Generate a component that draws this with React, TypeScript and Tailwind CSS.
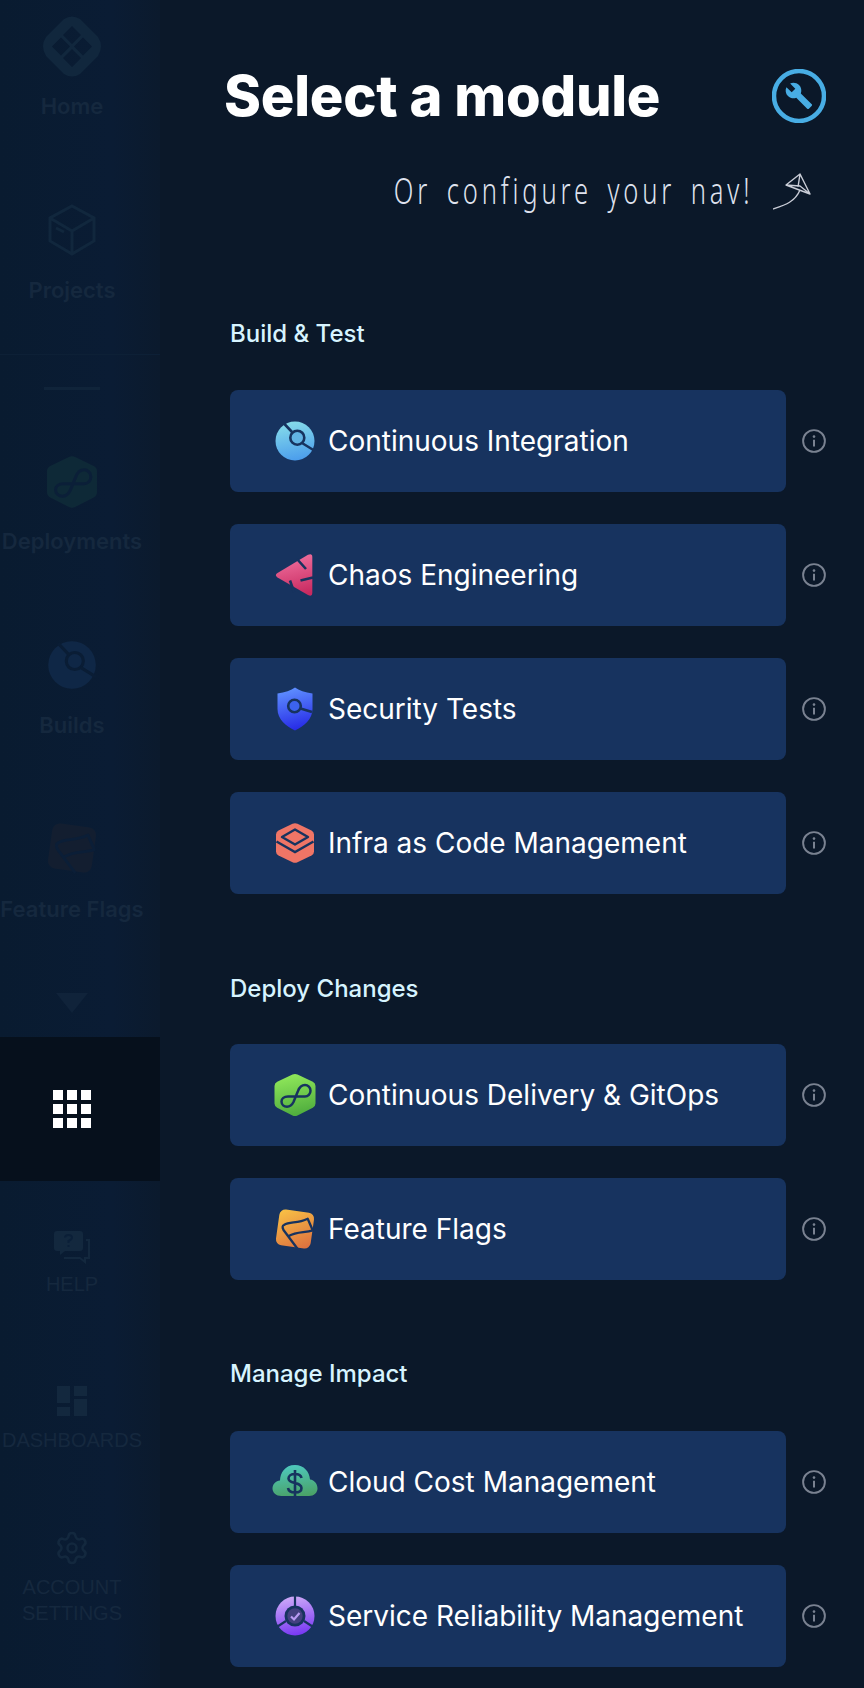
import React from "react";

const CARD_DARK = "#17335f";

function Grad({ id, from, to, diag = false }: { id: string; from: string; to: string; diag?: boolean }) {
  return (
    <defs>
      <linearGradient id={id} x1={diag ? "0.2" : "0.4"} y1="0" x2={diag ? "0.8" : "0.6"} y2="1">
        <stop offset="0" stopColor={from} />
        <stop offset="1" stopColor={to} />
      </linearGradient>
    </defs>
  );
}

function CiIcon({ uid = "ci", from = "#86dcea", to = "#4a9cec", cut = CARD_DARK, lens = "#62b4e4", w = 46 }: any) {
  return (
    <svg width={w} height={w} viewBox="0 0 46 46" className="shrink-0">
      <Grad id={uid} from={from} to={to} />
      <circle cx="23" cy="23" r="19.5" fill={`url(#${uid})`} />
      <circle cx="25.3" cy="19.7" r="7" fill={lens} stroke={cut} strokeWidth="2.6" />
      <path d="M11.500 5 20 14M30 25 43 33" stroke={cut} strokeWidth="2.6" fill="none" />
    </svg>
  );
}

function ChaosIcon() {
  return (
    <svg width="46" height="46" viewBox="0 0 46 46" className="shrink-0">
      <Grad id="chaos" from="#f0719f" to="#c82a60" />
      <path d="M5.500 21 36 2.800Q40.300 1 40.300 5V41Q40.300 45 36 43L5.500 25.500Q2.200 23 5.500 21Z" fill="url(#chaos)" />
      <path d="M25 7 34 17M28.500 28.500 41 25.500M18 28.500 22 40" stroke={CARD_DARK} strokeWidth="2.600" fill="none" />
    </svg>
  );
}

function ShieldIcon() {
  return (
    <svg width="46" height="46" viewBox="0 0 46 46" className="shrink-0">
      <Grad id="shield" from="#5f90ff" to="#2528e6" />
      <path d="M23 1.500C27 4.500 33 6.500 40.500 7.500V23C40.500 33 32 40.500 23 44.500C14 40.500 5.500 33 5.500 23V7.500C13 6.500 19 4.500 23 1.500Z" fill="url(#shield)" />
      <circle cx="22.500" cy="20" r="6.300" fill="#3c63ee" stroke={CARD_DARK} strokeWidth="2.600" />
      <path d="M28.500 22.500 40 26" stroke={CARD_DARK} strokeWidth="2.600" fill="none" />
    </svg>
  );
}

function InfraIcon() {
  return (
    <svg width="46" height="46" viewBox="0 0 46 46" className="shrink-0">
      <path d="M20.500 3.700Q23 2.600 25.500 3.700L39.500 10.500Q42 11.800 42 14.500V31.500Q42 34.200 39.500 35.500L25.500 42.300Q23 43.400 20.500 42.300L6.500 35.500Q4 34.200 4 31.500V14.500Q4 11.800 6.500 10.500Z" fill="#ef7566" />
      <path d="M23 9.500 36 17 23 24.500 10 17Z" fill="none" stroke={CARD_DARK} strokeWidth="2.400" strokeLinejoin="round" />
      <path d="M4.500 21.500 23 32 41.500 21.500" fill="none" stroke={CARD_DARK} strokeWidth="2.400" />
    </svg>
  );
}

function HexInfinity({ uid = "cd", from = "#90e85a", to = "#4dab3d", cut = CARD_DARK, w = 46 }: any) {
  return (
    <svg width={w} height={w} viewBox="0 0 46 46" className="shrink-0">
      <Grad id={uid} from={from} to={to} />
      <path d="M20.500 2.500Q23 1.300 25.500 2.500L40.800 9.800Q43.500 11.200 43.500 14V31.500Q43.500 34.300 40.800 35.700L25.500 43.500Q23 44.700 20.500 43.500L5.200 35.700Q2.500 34.300 2.500 31.500V14Q2.500 11.200 5.200 9.800Z" fill={`url(#${uid})`} />
      <path d="M33 24.500H16C12 24.500 9.500 26.500 9.500 29.500C9.500 32.500 12 34.700 15 34.700C18 34.700 20 33 21.500 30L26 19C27.500 15 30 13 33 13C36 13 38.500 15.500 38.500 18.700C38.500 22 36 24.500 33 24.500Z" fill="none" stroke={cut} strokeWidth="2.500" />
    </svg>
  );
}

function FlagIcon({ uid = "ff", from = "#f7bd45", to = "#de733f", cut = CARD_DARK, w = 46 }: any) {
  return (
    <svg width={w} height={w} viewBox="0 0 46 46" className="shrink-0">
      <Grad id={uid} from={from} to={to} diag />
      <rect x="5.500" y="5" width="35" height="36" rx="6" transform="rotate(8 23 23)" fill={`url(#${uid})`} />
      <path d="M25.700 43 11.500 24Q9.500 20 12 19C18 15 25 18 35.700 12.700L40.700 24.300C33 27 25 25 16.700 30" fill="none" stroke={cut} strokeWidth="2.300" strokeLinejoin="round" />
    </svg>
  );
}

function CloudIcon() {
  return (
    <svg width="46" height="46" viewBox="0 0 46 46" className="shrink-0">
      <Grad id="cloud" from="#4ec8be" to="#4aa268" />
      <path d="M9.500 37C4 37 .5 33.500 .5 29.500C.5 25 4 22 8 21.500C8 14 13 6 23 6C32 6 37.500 13 38 20.500C42.500 21 45.500 25 45.500 29.500C45.500 33.500 42 37 37 37Z" fill="url(#cloud)" />
      <path d="M29.500 19C29 16.500 26.500 15 23 15C19 15 16.500 16.800 16.500 19.500C16.500 25.500 29.500 22.500 29.500 29C29.500 31.800 27 33.500 23 33.500C19 33.500 16.500 31.800 16 29M23 11V39" fill="none" stroke={CARD_DARK} strokeWidth="2.600" />
    </svg>
  );
}

function SreIcon() {
  return (
    <svg width="46" height="46" viewBox="0 0 46 46" className="shrink-0">
      <Grad id="sre" from="#cda9f8" to="#7736f2" />
      <circle cx="23" cy="23" r="19.500" fill="url(#sre)" />
      <path d="M23 2V13M14 28 4 34.500M32 28 42 34.500" stroke={CARD_DARK} strokeWidth="2.200" />
      <circle cx="23" cy="23" r="10.500" fill={CARD_DARK} />
      <circle cx="23" cy="23" r="7.700" fill="#43407f" />
      <path d="M19 23.500 22 26.500 27.500 20" fill="none" stroke="#b99bf2" strokeWidth="2.200" />
    </svg>
  );
}

function Info() {
  return (
    <svg width="24" height="24" viewBox="0 0 24 24" className="shrink-0">
      <circle cx="12" cy="12" r="10.900" fill="none" stroke="#7a8291" strokeWidth="1.900" />
      <circle cx="12" cy="7.600" r="1.300" fill="#7a8291" />
      <path d="M12 10.800V17.600" stroke="#7a8291" strokeWidth="2" />
    </svg>
  );
}

function ModuleRow({ icon, label, className = "" }: { icon: React.ReactNode; label: string; className?: string }) {
  return (
    <div className={`flex items-center gap-4 ${className}`}>
      <div className="flex h-[102px] w-[556px] items-center gap-[10px] rounded-lg bg-[#17335f] pl-[42px]">
        {icon}
        <span className="text-[28px] leading-none font-normal text-white">{label}</span>
      </div>
      <Info />
    </div>
  );
}

function SectionLabel({ children, className = "" }: { children: React.ReactNode; className?: string }) {
  return <div className={`h-8 text-[24px] leading-8 font-medium text-[#d7f4ff] ${className}`}>{children}</div>;
}

function NavLabel({ children, className = "" }: { children: React.ReactNode; className?: string }) {
  return <div className={`text-center text-[22px] leading-6 font-semibold whitespace-nowrap text-[#15283e] ${className}`}>{children}</div>;
}

function NavCaps({ children, className = "" }: { children: React.ReactNode; className?: string }) {
  return <div className={`text-center text-[20px] leading-6 whitespace-nowrap text-[#15283e] [font-family:'Liberation_Sans',sans-serif] ${className}`}>{children}</div>;
}

const ICON = "#11273d";

function Sidebar() {
  return (
    <aside className="flex h-[1688px] w-[160px] shrink-0 flex-col items-center bg-gradient-to-r from-[#091b30] via-[#0a1c34] via-70% to-[#0b1a2d] pr-4">
      <svg width="60" height="61" viewBox="0 0 60 61" className="mt-4 shrink-0">
        <path fillRule="evenodd" fill={ICON} d="M22 3Q30-2 38 3L56 21Q62 30 56 40L38 58Q30 63 22 58L4 40Q-2 30 4 21ZM30 10 21 19 30 28 39 19ZM19 21.500 10 30.500 19 39.500 28 30.500ZM41 21.500 32 30.500 41 39.500 50 30.500ZM30 33 21 42 30 51 39 42Z" />
      </svg>
      <NavLabel className="mt-[17px]">Home</NavLabel>
      <svg width="48" height="52" viewBox="0 0 48 52" className="mt-[86px] shrink-0" fill="none" stroke={ICON} strokeWidth="3">
        <path d="M24 2 46 14V37L24 50 2 37V14ZM2 14 24 27 46 14M24 27V50M8 24 16 28" />
      </svg>
      <NavLabel className="mt-[22px]">Projects</NavLabel>
      <div className="mt-[52px] -mr-4 h-px w-[160px] bg-[#0d2036]" />
      <div className="mt-8 h-[3px] w-14 bg-[#10243a]" />
      <div className="mt-16">
        <HexInfinity uid="nd" from="#0e2937" to="#0e2937" cut="#0b1f38" w={56} />
      </div>
      <NavLabel className="mt-[19px]">Deployments</NavLabel>
      <div className="mt-[84px]">
        <CiIcon uid="nb" from="#0f2746" to="#0f2746" cut="#0a1d35" lens="#0f2746" w={56} />
      </div>
      <NavLabel className="mt-5">Builds</NavLabel>
      <div className="mt-[82px]">
        <FlagIcon uid="nf" from="#131e30" to="#131e30" cut="#0b1e37" w={58} />
      </div>
      <NavLabel className="mt-5">Feature Flags</NavLabel>
      <svg width="32" height="20" viewBox="0 0 32 20" className="mt-[72px] shrink-0">
        <path d="M0 0H32L16 20Z" fill="#10233a" />
      </svg>
      <div className="mt-6 -mr-4 flex h-[144px] w-[160px] shrink-0 items-center justify-center bg-[#06101c] pr-4">
        <div className="grid grid-cols-3 gap-1">
          {Array.from({ length: 9 }).map((_, i) => (
            <div key={i} className="size-[10px] bg-white" />
          ))}
        </div>
      </div>
      <svg width="36" height="33" viewBox="0 0 36 33" className="mt-[50px] shrink-0">
        <path d="M3 0H26Q29 0 29 3V17Q29 20 26 20H11L6 24V20H3Q0 20 0 17V3Q0 0 3 0Z" fill="#13283e" />
        <path d="M32 9H35V27H31V31L26 27H10" fill="none" stroke="#13283e" strokeWidth="2" />
        <path d="M11 6.500Q11 4 14.500 4T18 6.500Q18 8.500 14.500 10V12M14.500 14V16" fill="none" stroke="#0b1f38" strokeWidth="2" />
      </svg>
      <NavCaps className="mt-2">HELP</NavCaps>
      <svg width="30" height="30" viewBox="0 0 30 30" className="mt-[90px] shrink-0" fill="#13283e">
        <rect x="0" y="0" width="13" height="17" />
        <rect x="17" y="0" width="13" height="10" />
        <rect x="0" y="21" width="13" height="9" />
        <rect x="17" y="13" width="13" height="17" />
      </svg>
      <NavCaps className="mt-3">DASHBOARDS</NavCaps>
      <svg width="36" height="36" viewBox="0 0 24 24" className="mt-[78px] shrink-0" fill="none" stroke="#13283e" strokeWidth="1.700" strokeLinecap="round" strokeLinejoin="round">
        <path d="M9.671 4.136a2.34 2.34 0 0 1 4.659 0 2.34 2.34 0 0 0 3.319 1.915 2.34 2.34 0 0 1 2.33 4.033 2.34 2.34 0 0 0 0 3.831 2.34 2.34 0 0 1-2.33 4.033 2.34 2.34 0 0 0-3.319 1.915 2.34 2.34 0 0 1-4.659 0 2.34 2.34 0 0 0-3.32-1.915 2.34 2.34 0 0 1-2.33-4.033 2.34 2.34 0 0 0 0-3.831A2.34 2.34 0 0 1 6.35 6.051a2.34 2.34 0 0 0 3.319-1.915" />
        <circle cx="12" cy="12" r="3" />
      </svg>
      <NavCaps className="mt-2 leading-[26px]">
        ACCOUNT
        <br />
        SETTINGS
      </NavCaps>
    </aside>
  );
}

function Header() {
  return (
    <>
      <div className="mt-[62px] flex h-[68px] w-[596px] items-center justify-between">
        <h1 className="-ml-[6px] text-[56px] leading-[68px] font-extrabold tracking-[-0.004em] whitespace-nowrap text-white">Select a module</h1>
        <svg width="54" height="54" viewBox="0 0 54 54" className="shrink-0">
          <circle cx="27" cy="27" r="25" fill="none" stroke="#48ade4" strokeWidth="4.500" />
          <g transform="translate(12.500 12.500) scale(1.200)">
            <path fill="#48ade4" d="M22.700 19l-9.100-9.100c.9-2.300.4-5-1.500-6.900-2-2-5-2.400-7.400-1.300L9 6 6 9 1.600 4.700C.4 7.100.9 10.100 2.900 12.100c1.900 1.900 4.600 2.400 6.900 1.500l9.100 9.100c.4.400 1 .4 1.400 0l2.300-2.300c.5-.4.500-1.100.1-1.400z" />
          </g>
        </svg>
      </div>
      <div className="mt-9 flex h-[50px] w-[583px] items-center justify-end gap-5">
        <span className="origin-right scale-x-[0.71] text-[36px] leading-none font-light tracking-[0.15em] [word-spacing:0.2em] whitespace-nowrap text-[#dfe2ee] [font-family:'Noto_Sans',sans-serif]">Or configure your nav!</span>
        <svg width="40" height="38" viewBox="0 0 40 38" className="shrink-0" fill="none" stroke="#c9ccd6" strokeWidth="1.400" strokeLinejoin="round">
          <path d="M0 37C12 33 22 30 27 18M13 13 27 2 37 22ZM13 13 27 14 37 22M27 2 25 15" />
        </svg>
      </div>
    </>
  );
}

export default function App() {
  return (
    <div className="flex h-[1688px] w-[864px] overflow-hidden bg-[#0b1829] font-['Inter',sans-serif]">
      <Sidebar />
      <main className="flex flex-col pl-[70px]">
        <Header />
        <SectionLabel className="mt-[102px]">Build &amp; Test</SectionLabel>
        <ModuleRow className="mt-10" icon={<CiIcon />} label="Continuous Integration" />
        <ModuleRow className="mt-8" icon={<ChaosIcon />} label="Chaos Engineering" />
        <ModuleRow className="mt-8" icon={<ShieldIcon />} label="Security Tests" />
        <ModuleRow className="mt-8" icon={<InfraIcon />} label="Infra as Code Management" />
        <SectionLabel className="mt-[79px]">Deploy Changes</SectionLabel>
        <ModuleRow className="mt-[39px]" icon={<HexInfinity />} label="Continuous Delivery & GitOps" />
        <ModuleRow className="mt-8" icon={<FlagIcon />} label="Feature Flags" />
        <SectionLabel className="mt-[78px]">Manage Impact</SectionLabel>
        <ModuleRow className="mt-[41px]" icon={<CloudIcon />} label="Cloud Cost Management" />
        <ModuleRow className="mt-8" icon={<SreIcon />} label="Service Reliability Management" />
      </main>
    </div>
  );
}
